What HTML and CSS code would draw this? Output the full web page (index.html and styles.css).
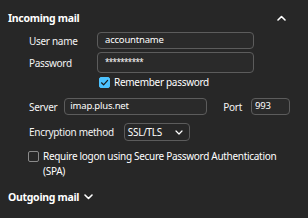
FILE: index.html
```html
<!DOCTYPE html>
<html>
<head>
<meta charset="utf-8">
<link rel="stylesheet" href="styles.css">
</head>
<body>
<div class="panel">
  <div class="section-head">
    <span class="section-title">Incoming mail</span>
    <svg class="chev-up" width="9" height="6" viewBox="0 0 9 6"><path d="M1 5 L4.5 1.5 L8 5" fill="none" stroke="#ffffff" stroke-width="1.6" stroke-linecap="round" stroke-linejoin="round"/></svg>
  </div>
  <div class="form">
    <div class="cred">
      <label class="lbl">User name</label>
      <div class="field user">accountname</div>
      <label class="lbl">Password</label>
      <div class="field pass">**********</div>
      <span></span>
      <div class="check-row remember">
        <span class="box checked"><svg width="9" height="9" viewBox="0 0 9 9"><path d="M1.5 4.8 L3.6 6.8 L7.6 2.4" fill="none" stroke="#1a1a1a" stroke-width="1.2" stroke-linecap="round" stroke-linejoin="round"/></svg></span>
        <span class="txt">Remember password</span>
      </div>
    </div>
    <div class="server-row">
      <label class="lbl">Server</label>
      <div class="field server">imap.plus.net</div>
      <label class="lbl port-lbl">Port</label>
      <div class="field port">993</div>
    </div>
    <div class="enc-row">
      <label class="lbl">Encryption method</label>
      <div class="select">SSL/TLS
        <svg class="chev-down" width="8" height="5" viewBox="0 0 8 5"><path d="M1 1 L4 4 L7 1" fill="none" stroke="#ffffff" stroke-width="1.2" stroke-linecap="round" stroke-linejoin="round"/></svg>
      </div>
    </div>
    <div class="check-row spa">
      <span class="box"></span>
      <span class="txt">Require logon using Secure Password Authentication (SPA)</span>
    </div>
  </div>
  <div class="section-head out">
    <span class="section-title">Outgoing mail</span>
    <svg class="chev-down2" width="9" height="6" viewBox="0 0 9 6"><path d="M1 1 L4.5 4.5 L8 1" fill="none" stroke="#ffffff" stroke-width="1.6" stroke-linecap="round" stroke-linejoin="round"/></svg>
  </div>
</div>
</body>
</html>
```
FILE: styles.css
```css
html, body {
  margin: 0;
  padding: 0;
  background: #272727;
}
body {
  font-family: "Noto Sans", "Open Sans", sans-serif;
  color: #ffffff;
  font-size: 10px;
  letter-spacing: -0.3px;
  width: 308px;
  height: 218px;
  overflow: hidden;
}
.panel {
  padding: 11px 0 0 8px;
}
.section-head {
  display: flex;
  align-items: center;
  height: 14px;
  width: 278px;
}
.section-title {
  font-weight: 700;
  font-size: 10.5px;
  line-height: 14px;
  letter-spacing: -0.3px;
}
.chev-up {
  margin-left: auto;
}
.form {
  padding-left: 21px;
  margin-top: 7px;
}
.cred {
  display: grid;
  grid-template-columns: 68px 157px;
  row-gap: 3px;
  align-items: center;
}
.lbl {
  color: #f4f4f4;
  line-height: 14px;
  white-space: nowrap;
}
.field {
  box-sizing: border-box;
  border: 1px solid #5c5c5c;
  border-radius: 4px;
  background: #2a2a2a;
  color: #ffffff;
  padding-left: 7px;
  line-height: 14px;
  font-size: 9.5px;
  letter-spacing: -0.2px;
}
.user { height: 17px; }
.pass { height: 21px; line-height: 17px; font-size: 8px; letter-spacing: -0.6px; }
.check-row {
  display: flex;
  align-items: flex-start;
}
.box {
  box-sizing: border-box;
  width: 11px;
  height: 11px;
  border: 1px solid #8a8a8a;
  border-radius: 2px;
  flex: none;
  display: flex;
  align-items: center;
  justify-content: center;
}
.box.checked {
  background: #4cc2ff;
  border-color: #4cc2ff;
}
.remember {
  margin-left: 2px;
  margin-top: 1px;
}
.remember .txt {
  margin-left: 4px;
  line-height: 12px;
  margin-top: -1px;
}
.server-row {
  display: flex;
  align-items: center;
  margin-top: 10px;
}
.server {
  width: 143px;
  height: 17px;
  margin-left: 7px;
  padding-left: 5px;
}
.port-lbl {
  margin-left: 16px;
}
.port {
  width: 39px;
  height: 17px;
  margin-left: 9px;
  padding-left: 3px;
}
.enc-row {
  display: flex;
  align-items: center;
  margin-top: 8px;
}
.select {
  box-sizing: border-box;
  display: flex;
  align-items: center;
  width: 66px;
  height: 18px;
  margin-left: 10px;
  border: 1px solid #5c5c5c;
  border-radius: 4px;
  padding-left: 3px;
  line-height: 14px;
}
.chev-down {
  margin-left: auto;
  margin-right: 6px;
}
.spa {
  margin-top: 10px;
  margin-left: -1px;
}
.spa .txt {
  margin-left: 4px;
  width: 250px;
  line-height: 15px;
  margin-top: -2px;
}
.out {
  margin-top: 11px;
}
.chev-down2 {
  margin-left: 5px;
}
```
